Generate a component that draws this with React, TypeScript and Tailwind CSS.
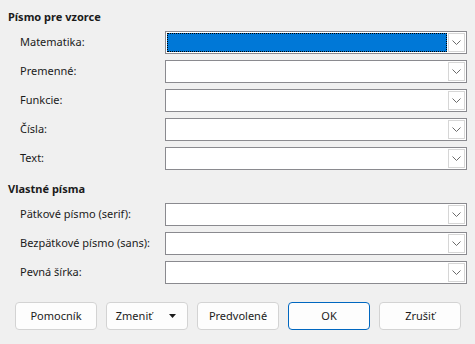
import React from 'react';

type Row = { label: string; focused?: boolean };

const formulaFonts: Row[] = [
  { label: 'Matematika:', focused: true },
  { label: 'Premenné:' },
  { label: 'Funkcie:' },
  { label: 'Čísla:' },
  { label: 'Text:' },
];

const customFonts: Row[] = [
  { label: 'Pätkové písmo (serif):' },
  { label: 'Bezpätkové písmo (sans):' },
  { label: 'Pevná šírka:' },
];

const Chevron = () => (
  <svg width="9" height="5" viewBox="0 0 9 5" fill="none">
    <path d="M0.5 0.5 L4.5 4.5 L8.5 0.5" stroke="#6b6b6b" strokeWidth="1" />
  </svg>
);

const Combo: React.FC<{ focused?: boolean }> = ({ focused }) => (
  <div className="flex h-[23px] w-[302px] shrink-0 border border-[#8a8a8f] bg-white">
    <div className="flex-1 p-px">
      {focused && <div className="h-full w-full border border-dotted border-black bg-[#0078d7]" />}
    </div>
    <div className="my-px mr-px flex w-[17px] items-center justify-center border border-[#d6d6d6] bg-white">
      <Chevron />
    </div>
  </div>
);

const FieldRow: React.FC<{ row: Row }> = ({ row }) => (
  <div className="flex h-[23px] items-center">
    <span className="w-[165px] shrink-0 whitespace-nowrap pl-[20px] text-[11px] text-[#1b1b1b]">{row.label}</span>
    <Combo focused={row.focused} />
  </div>
);

const Btn: React.FC<{ children: React.ReactNode; primary?: boolean }> = ({ children, primary }) => (
  <button
    type="button"
    className={`flex h-[28px] w-[82px] items-center justify-center rounded-[4px] border bg-[#fdfdfd] text-[11px] text-[#1b1b1b] ${
      primary ? 'border-[#0067c0]' : 'border-[#d3d3d3]'
    }`}
  >
    {children}
  </button>
);

export default function App() {
  return (
    <div
      className="h-[344px] w-[475px] bg-[#f0f0f0] pt-[9px]"
      style={{ fontFamily: '"Noto Sans", "Liberation Sans", sans-serif' }}
    >
      <h3 className="h-[16px] pl-2 text-[11px] font-bold leading-[16px] text-[#1b1b1b]">Písmo pre vzorce</h3>
      <div className="mt-[6px] flex flex-col gap-[6px]">
        {formulaFonts.map((r) => (
          <FieldRow key={r.label} row={r} />
        ))}
      </div>

      <h3 className="mt-[11px] h-[16px] pl-2 text-[11px] font-bold leading-[16px] text-[#1b1b1b]">Vlastné písma</h3>
      <div className="mt-[6px] flex flex-col gap-[6px]">
        {customFonts.map((r) => (
          <FieldRow key={r.label} row={r} />
        ))}
      </div>

      <div className="mt-[18px] flex gap-[9px] pl-[15px]">
        <Btn>Pomocník</Btn>
        <Btn>
          <span className="w-[54px] shrink-0 text-center">Zmeniť</span>
          <svg width="7" height="4" viewBox="0 0 7 4" className="ml-auto mr-[11px]">
            <path d="M0 0 H7 L3.5 4 Z" fill="#1b1b1b" />
          </svg>
        </Btn>
        <Btn>Predvolené</Btn>
        <Btn primary>OK</Btn>
        <Btn>Zrušiť</Btn>
      </div>
    </div>
  );
}
